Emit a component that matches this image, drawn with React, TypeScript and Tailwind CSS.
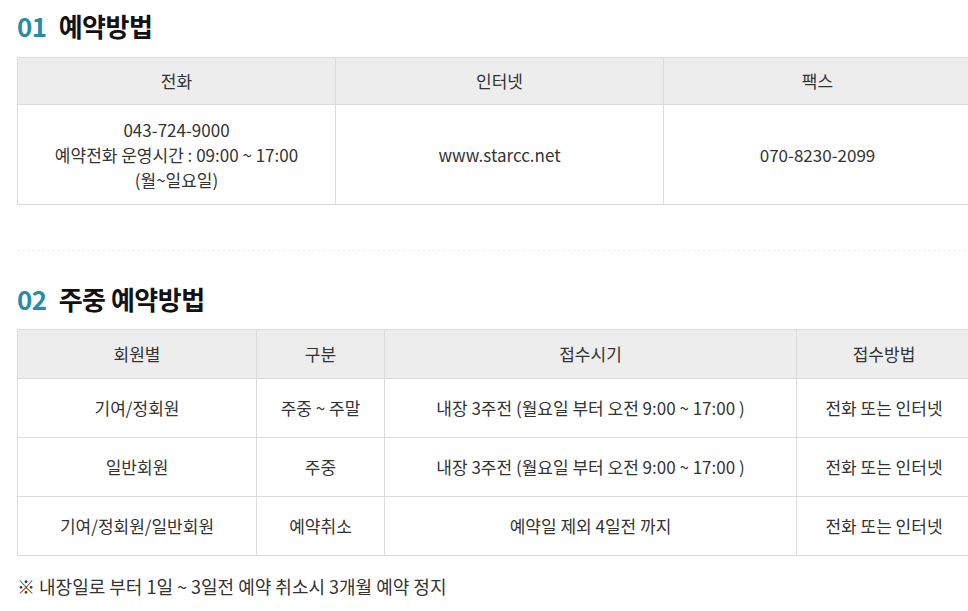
import React from "react"

const font = { fontFamily: '"Noto Sans CJK KR", "Noto Sans", sans-serif' }

type Row = string[]

function Title({ no, text }: { no: string; text: string }) {
  return (
    <div className="flex items-center gap-3 h-9 text-[26px] font-bold leading-9 tracking-[-0.5px]">
      <span className="text-[#2a8ba8]">{no}</span>
      <span className="text-[#111]">{text}</span>
    </div>
  )
}

const method: Row[] = [["www.starcc.net", "070-8230-2099"]]

const weekday: Row[] = [
  ["기여/정회원", "주중 ~ 주말", "내장 3주전 (월요일 부터 오전 9:00 ~ 17:00 )", "전화 또는 인터넷"],
  ["일반회원", "주중", "내장 3주전 (월요일 부터 오전 9:00 ~ 17:00 )", "전화 또는 인터넷"],
  ["기여/정회원/일반회원", "예약취소", "예약일 제외 4일전 까지", "전화 또는 인터넷"],
]

export default function App() {
  return (
    <div className="w-[968px] h-[611px] overflow-hidden bg-white text-[#333]" style={font}>
      <div className="w-[954px] ml-[17px] pt-2">
        <Title no="01" text="예약방법" />

        <table className="mt-[13px] w-full table-fixed border-collapse text-[17px]">
          <colgroup>
            <col className="w-[318px]" />
            <col className="w-[328px]" />
            <col className="w-[308px]" />
          </colgroup>
          <thead>
            <tr className="h-[47px] bg-[#ededed]">
              {["전화", "인터넷", "팩스"].map((h) => (
                <th key={h} className="border border-[#dcdcdc] font-normal text-center">
                  {h}
                </th>
              ))}
            </tr>
          </thead>
          <tbody>
            {method.map((r, i) => (
              <tr key={i} className="h-[100px]">
                <td className="border border-[#dcdcdc] text-center leading-[25px]">
                  043-724-9000
                  <br />
                  예약전화 운영시간 : 09:00 ~ 17:00
                  <br />
                  (월~일요일)
                </td>
                {r.map((c) => (
                  <td key={c} className="border border-[#dcdcdc] text-center">
                    {c}
                  </td>
                ))}
              </tr>
            ))}
          </tbody>
        </table>

        <div className="mt-[45px] border-t border-dashed border-[#f0f0f0]" />

        <div className="mt-[30px]">
          <Title no="02" text="주중 예약방법" />
        </div>

        <table className="mt-3 w-full table-fixed border-collapse text-[17px]">
          <colgroup>
            <col className="w-[239px]" />
            <col className="w-[128px]" />
            <col className="w-[412px]" />
            <col className="w-[175px]" />
          </colgroup>
          <thead>
            <tr className="h-[49px] bg-[#ededed]">
              {["회원별", "구분", "접수시기", "접수방법"].map((h) => (
                <th key={h} className="border border-[#dcdcdc] font-normal text-center">
                  {h}
                </th>
              ))}
            </tr>
          </thead>
          <tbody>
            {weekday.map((r, i) => (
              <tr key={i} className="h-[59px]">
                {r.map((c, j) => (
                  <td key={j} className="border border-[#dcdcdc] text-center">
                    {c}
                  </td>
                ))}
              </tr>
            ))}
          </tbody>
        </table>

        <p className="mt-[18px] text-[18px] leading-6">※ 내장일로 부터 1일 ~ 3일전 예약 취소시 3개월 예약 정지</p>
      </div>
    </div>
  )
}
